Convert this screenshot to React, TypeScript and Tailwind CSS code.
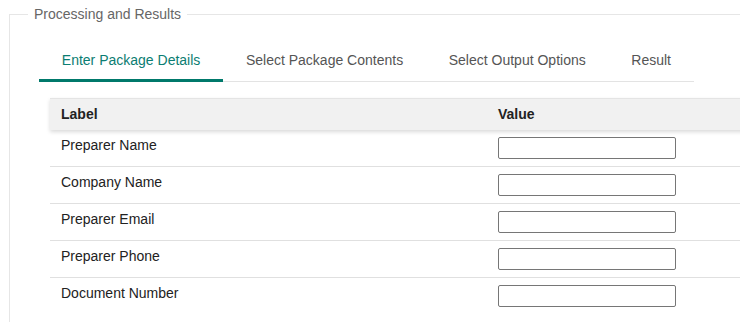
import React from 'react';

const tabs = ['Enter Package Details', 'Select Package Contents', 'Select Output Options', 'Result'];
const fields = ['Preparer Name', 'Company Name', 'Preparer Email', 'Preparer Phone', 'Document Number'];

const App: React.FC = () => {
  return (
    <div className="w-[740px] h-[322px] overflow-hidden bg-white pt-[6px] font-['Liberation_Sans',Arial,sans-serif]">
      {/* 外框 fieldset */}
      <fieldset className="ml-[9px] w-[800px] h-[400px] border border-[#e6e6e6]">
        <legend className="ml-[18px] px-[6px] text-[14px] leading-[16px] text-[#666]">Processing and Results</legend>

        {/* tabs */}
        <div className="ml-[29px] mt-[18px] flex w-fit border-b border-[#e3e3e3]">
          {tabs.map((t, i) => (
            <div
              key={t}
              className={
                i === 0
                  ? 'px-[22.8px] pt-[10px] pb-[9px] text-[14px] leading-[20px] text-[#0b7d72] border-b-[3px] border-[#00796b] -mb-px'
                  : 'px-[22.8px] pt-[10px] pb-[9px] text-[14px] leading-[20px] text-[#555] border-b-[3px] border-transparent -mb-px'
              }
            >
              {t}
            </div>
          ))}
        </div>

        {/* table */}
        <div className="ml-[40px] mt-[16px] text-[14px] text-[#222]">
          <div className="flex h-[32px] items-center bg-[#f1f1f1] border-t border-[#e4e4e4] font-bold shadow-[0_2px_4px_rgba(0,0,0,0.15)]">
            <div className="w-[437px] pl-[11px]">Label</div>
            <div className="pl-[11px]">Value</div>
          </div>
          {fields.map((f, i) => (
            <div
              key={f}
              className={
                i < fields.length - 1
                  ? 'flex h-[37px] border-b border-[#e0e0e0]'
                  : 'flex h-[37px]'
              }
            >
              <div className="w-[437px] pl-[11px] pt-[6px] leading-[18px]">{f}</div>
              <div className="pl-[11px] pt-[7px]">
                <input type="text" className="block w-[178px] h-[22px] border border-[#767676] rounded-[2px] bg-white" />
              </div>
            </div>
          ))}
        </div>
      </fieldset>
    </div>
  );
};

export default App;
